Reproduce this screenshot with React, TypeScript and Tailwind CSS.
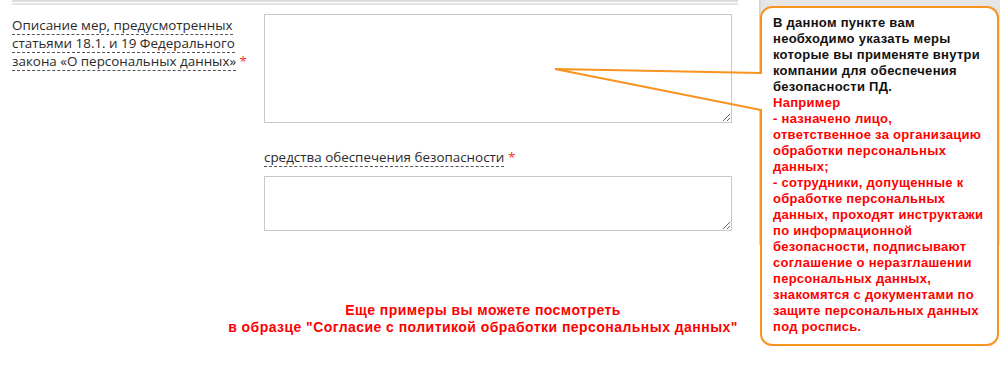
import React from "react";

const black = [
  "В данном пункте вам",
  "необходимо указать меры",
  "которые вы применяте внутри",
  "компании для обеспечения",
  "безопасности ПД.",
];
const red = [
  "Например",
  "- назначено лицо,",
  "ответственное за организацию",
  "обработки персональных",
  "данных;",
  "- сотрудники, допущенные к",
  "обработке персональных",
  "данных, проходят инструктажи",
  "по информационной",
  "безопасности, подписывают",
  "соглашение о неразглашении",
  "персональных данных,",
  "знакомятся с документами по",
  "защите персональных данных",
  "под роспись.",
];

export default function App() {
  return (
    <div className="relative w-[1000px] h-[367px] bg-white overflow-hidden">
      {/* top rules */}
      <div className="ml-[12px] w-[726px] flex flex-col">
        <div className="h-[2px] bg-[#dcdcdc]" />
        <div className="h-[2px] mt-[1px] bg-[#e2e2e2]" />
      </div>

      <div className="flex mt-[9px]">
        <div className="w-[264px] shrink-0 pl-[12px] pr-[6px] pt-[2px] text-[13.4px] leading-[18px] text-[#2a2a2a]" style={{ fontFamily: '"Open Sans", sans-serif' }}>
          <span className="border-b border-dashed border-[#555]">
            Описание мер, предусмотренных статьями 18.1. и 19 Федерального закона «О персональных данных»
          </span>{" "}
          <span className="text-[#ff2a2a]">*</span>
        </div>
        <div className="w-[468px] flex flex-col" style={{ fontFamily: '"Open Sans", sans-serif' }}>
          <textarea className="w-[468px] h-[109px] border border-[#c8c8c8] bg-white outline-none" />
          <div className="mt-[25px] text-[13.4px] leading-[18px] text-[#2a2a2a]">
            <span className="border-b border-dashed border-[#555]">средства обеспечения безопасности</span>{" "}
            <span className="text-[#ff2a2a]">*</span>
          </div>
          <textarea className="mt-[10px] w-[468px] h-[55px] border border-[#c8c8c8] bg-white outline-none" />
        </div>
      </div>

      <div
        className="mt-[71px] w-[966px] text-center text-[14px] leading-[17px] font-bold tracking-[0.45px] text-[#ff0000]"
        style={{ fontFamily: '"Liberation Sans", Arial, sans-serif' }}
      >
        Еще примеры вы можете посмотреть
        <br />
        в образце "Согласие с политикой обработки персональных данных"
      </div>

      {/* grey backdrop of callout */}
      <div className="absolute left-[759px] top-0 w-[241px] h-[245px] bg-[#e6e6e6] bg-gradient-to-r from-[#cfcfcf] via-[#e6e6e6] to-[#e6e6e6] bg-[length:6px_100%] bg-no-repeat" />

      {/* callout bubble */}
      <div
        className="absolute left-[760px] top-[6px] w-[239px] h-[340px] rounded-[12px] border-2 border-[#f7931e] bg-white pl-[11px] pt-[7px] text-[13px] leading-[16px] font-bold tracking-[0.28px]"
        style={{ fontFamily: '"Liberation Sans", Arial, sans-serif' }}
      >
        {black.map((l, i) => (
          <div key={"b" + i} className="text-[#111] whitespace-nowrap">{l}</div>
        ))}
        {red.map((l, i) => (
          <div key={"r" + i} className="text-[#ff0000] whitespace-nowrap">{l}</div>
        ))}
      </div>

      {/* tail */}
      <svg className="absolute left-0 top-0" width="1000" height="367" viewBox="0 0 1000 367">
        <rect x="759" y="74" width="5" height="35" fill="white" />
        <polyline
          points="761,73 555,69 761,110"
          fill="none"
          stroke="#f7931e"
          strokeWidth="2"
          strokeLinejoin="miter"
        />
      </svg>
    </div>
  );
}
